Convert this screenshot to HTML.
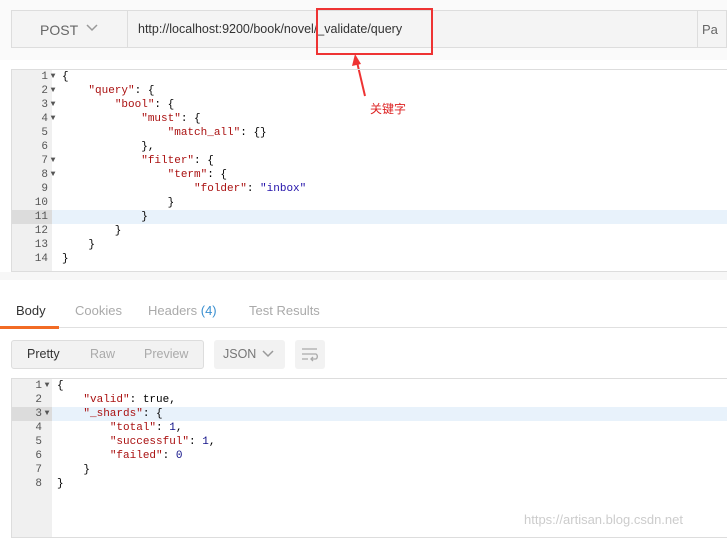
<html><head><style>
body{margin:0;width:727px;height:537px;background:#fff;font-family:"Liberation Sans",sans-serif;position:relative;overflow:hidden}
.a{position:absolute}
.code{font-family:"Liberation Mono",monospace;font-size:11px;letter-spacing:0;line-height:14px;white-space:pre;color:#000}
.k{color:#a11}.s{color:#21a}.n{color:#118}
.g{font-family:"Liberation Mono",monospace;font-size:11px;line-height:14px;color:#555;text-align:right;white-space:pre}
.g i{font-style:normal;font-size:8px;display:inline-block;width:10px;text-align:center;vertical-align:1px}
</style></head><body>
<div class="a" style="left:0;top:0;width:727px;height:60px;background:#fafafa"></div>
<div class="a" style="left:11px;top:10px;width:716px;height:38px;background:#f4f4f4;border:1px solid #ddd;box-sizing:border-box"></div>
<div class="a" style="left:127px;top:10px;width:1px;height:38px;background:#ddd"></div>
<div class="a" style="left:697px;top:10px;width:1px;height:38px;background:#ddd"></div>
<div class="a" style="left:40px;top:22px;font-size:14px;color:#666">POST</div>
<svg class="a" style="left:86px;top:24px" width="12" height="8"><path d="M1 1L6 6L11 1" stroke="#999" stroke-width="1.5" fill="none"/></svg>
<div class="a" style="left:138px;top:22px;font-size:12.5px;color:#333">http://localhost:9200/book/novel/_validate/query</div>
<div class="a" style="left:702px;top:22px;font-size:13px;color:#666">Pa</div>
<div class="a" style="left:316px;top:8px;width:117px;height:47px;border:2px solid #e33;box-sizing:border-box"></div>
<svg class="a" style="left:340px;top:50px" width="40" height="50"><path d="M25 46L17 12" stroke="#e33" stroke-width="2"/><path d="M15 4L12 16L21 14Z" fill="#e33"/></svg>
<div class="a" style="left:370px;top:100px;font-size:12px;color:#d22;font-family:'Liberation Sans','Noto Sans CJK SC',sans-serif">关键字</div>

<div class="a" style="left:11px;top:69px;width:716px;height:203px;border:1px solid #ddd;border-right:none;box-sizing:border-box"></div>
<div class="a" style="left:12px;top:70px;width:40px;height:201px;background:#f0f0f0"></div>
<div class="a" style="left:52px;top:210px;width:675px;height:14px;background:#e8f2fb"></div>
<div class="a" style="left:12px;top:210px;width:40px;height:14px;background:#dcdcdc"></div>
<div class="a g" style="left:12px;top:70px;width:46px">1<i>▼</i>
2<i>▼</i>
3<i>▼</i>
4<i>▼</i>
5<i> </i>
6<i> </i>
7<i>▼</i>
8<i>▼</i>
9<i> </i>
10<i> </i>
11<i> </i>
12<i> </i>
13<i> </i>
14<i> </i></div>
<div class="a code" style="left:62px;top:70px">{
    <span class="k">"query"</span>: {
        <span class="k">"bool"</span>: {
            <span class="k">"must"</span>: {
                <span class="k">"match_all"</span>: {}
            },
            <span class="k">"filter"</span>: {
                <span class="k">"term"</span>: {
                    <span class="k">"folder"</span>: <span class="s">"inbox"</span>
                }
            }
        }
    }
}</div>

<div class="a" style="left:0;top:272px;width:727px;height:8px;background:#f7f7f7"></div>
<div class="a" style="left:16px;top:303px;font-size:13px;color:#333">Body</div>
<div class="a" style="left:75px;top:303px;font-size:13px;color:#aaa">Cookies</div>
<div class="a" style="left:148px;top:303px;font-size:13px;color:#aaa">Headers <span style="color:#3a8fd0">(4)</span></div>
<div class="a" style="left:249px;top:303px;font-size:13px;color:#aaa">Test Results</div>
<div class="a" style="left:0;top:327px;width:727px;height:1px;background:#e0e0e0"></div>
<div class="a" style="left:0;top:326px;width:59px;height:3px;background:#f26b24"></div>

<div class="a" style="left:11px;top:340px;width:193px;height:29px;background:#f2f2f2;border:1px solid #ddd;border-radius:3px;box-sizing:border-box"></div>
<div class="a" style="left:27px;top:347px;font-size:12.5px;color:#333">Pretty</div>
<div class="a" style="left:90px;top:347px;font-size:12.5px;color:#aaa">Raw</div>
<div class="a" style="left:144px;top:347px;font-size:12.5px;color:#aaa">Preview</div>
<div class="a" style="left:214px;top:340px;width:71px;height:29px;background:#f2f2f2;border-radius:3px"></div>
<div class="a" style="left:223px;top:347px;font-size:12.5px;color:#777">JSON</div>
<svg class="a" style="left:262px;top:350px" width="12" height="8"><path d="M1 1L6 6L11 1" stroke="#999" stroke-width="1.5" fill="none"/></svg>
<div class="a" style="left:295px;top:340px;width:30px;height:29px;background:#f2f2f2;border-radius:3px"></div>
<svg class="a" style="left:300px;top:346px" width="20" height="16"><path d="M2 3H17M2 8H16a3 3 0 0 1 0 5H12M2 13H8M13 11l-2 2 2 2" stroke="#aaa" stroke-width="1.3" fill="none"/></svg>

<div class="a" style="left:11px;top:378px;width:716px;height:160px;border:1px solid #ddd;border-right:none;box-sizing:border-box"></div>
<div class="a" style="left:12px;top:379px;width:40px;height:158px;background:#f0f0f0"></div>
<div class="a" style="left:52px;top:407px;width:675px;height:14px;background:#e8f2fb"></div>
<div class="a" style="left:12px;top:407px;width:40px;height:14px;background:#dcdcdc"></div>
<div class="a g" style="left:12px;top:379px;width:40px">1<i>▼</i>
2<i> </i>
3<i>▼</i>
4<i> </i>
5<i> </i>
6<i> </i>
7<i> </i>
8<i> </i></div>
<div class="a code" style="left:57px;top:379px">{
    <span class="k">"valid"</span>: true,
    <span class="k">"_shards"</span>: {
        <span class="k">"total"</span>: <span class="n">1</span>,
        <span class="k">"successful"</span>: <span class="n">1</span>,
        <span class="k">"failed"</span>: <span class="n">0</span>
    }
}</div>
<div class="a" style="left:524px;top:512px;font-size:13px;color:#ccc">https://artisan.blog.csdn.net</div>
</body></html>
